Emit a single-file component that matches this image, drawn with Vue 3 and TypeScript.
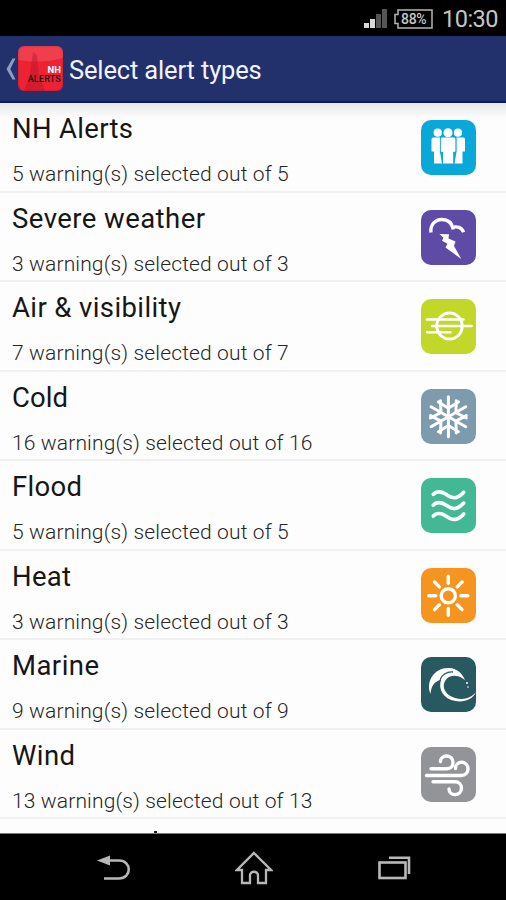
<script setup lang="ts">
interface AlertType {
  name: string
  count: number
  icon: string
  color: string
  width: number
}

const alerts: AlertType[] = [
  { name: 'NH Alerts', count: 5, icon: 'people', color: '#08a9d8', width: 121 },
  { name: 'Severe weather', count: 3, icon: 'storm', color: '#5d4ba5', width: 193 },
  { name: 'Air & visibility', count: 7, icon: 'air', color: '#c1d72a', width: 169 },
  { name: 'Cold', count: 16, icon: 'cold', color: '#7d9bad', width: 56 },
  { name: 'Flood', count: 5, icon: 'flood', color: '#43b894', width: 70 },
  { name: 'Heat', count: 3, icon: 'heat', color: '#f5941f', width: 59 },
  { name: 'Marine', count: 9, icon: 'marine', color: '#285961', width: 87 },
  { name: 'Wind', count: 13, icon: 'wind', color: '#929497', width: 63 },
]

const arms = [0, 60, 120, 180, 240, 300]
const rays = [0, 45, 90, 135, 180, 225, 270, 315]
</script>

<template>
  <div class="screen">
    <div class="status">
      <svg class="signal" width="23" height="20" viewBox="0 0 23 20">
        <rect x="0" y="14" width="5" height="5" fill="#d8d8d8" />
        <rect x="6" y="10" width="5" height="9" fill="#d8d8d8" />
        <rect x="12" y="5" width="5" height="14" fill="#555" />
        <rect x="18" y="0" width="5" height="19" fill="#555" />
      </svg>
      <div class="battery">
        <svg width="39" height="20" viewBox="0 0 39 20">
          <path d="M4 1H38V19H4V14.5H1V5.5H4Z" fill="none" stroke="#b5b5b5" stroke-width="1.5" />
        </svg>
        <span>88%</span>
      </div>
      <span class="clock">10:30</span>
    </div>

    <header class="bar">
      <svg class="chevron" width="10" height="22" viewBox="0 0 10 22">
        <path d="M6.5 .5H9.5L4.3 11L9.5 21.5H6.5L.5 11Z" fill="#919bc3" />
      </svg>
      <div class="logo">
        <svg width="45" height="45" viewBox="0 0 45 45">
          <path d="M0 0H45V12Q24 18 0 14Z" fill="#fff" opacity=".13" />
          <path d="M15 6L19 9L21 29L27 45H6L12 28Z" fill="#a31227" opacity=".35" />
        </svg>
        <div class="logo-text"><b>NH</b><span>ALERTS</span></div>
      </div>
      <h1>Select alert types</h1>
    </header>

    <main class="list">
      <div v-for="a in alerts" :key="a.name" class="row">
        <div class="text">
          <svg class="title" width="260" height="36">
            <text x="0" y="27.5" :textLength="a.width" lengthAdjust="spacing">{{ a.name }}</text>
          </svg>
          <p>{{ a.count }} warning(s) selected out of {{ a.count }}</p>
        </div>
        <svg class="icon" width="55" height="55" viewBox="0 0 55 55">
          <rect width="55" height="55" rx="10" :fill="a.color" />
          <g v-if="a.icon === 'people'" fill="#fff">
            <circle cx="16.7" cy="12.7" r="4.1" />
            <circle cx="37" cy="12.7" r="4.1" />
            <path d="M12 17.5H19V32L21 43.5H13V31.5H10.5V19.5Q10.5 17.5 12 17.5Z" />
            <path d="M42.5 17.5H35.5V32L33.5 43.5H41.5V31.5H44V19.5Q44 17.5 42.5 17.5Z" />
            <circle cx="27" cy="12.7" r="4.5" />
            <path d="M21.5 17.5H32.7Q34.6 17.5 34.6 19.5V32H32.3V43.5H22V32H19.7V19.5Q19.7 17.5 21.5 17.5Z" />
            <path d="M19.3 18V32H21.5V43M35 18V32H32.8V43" fill="none" :stroke="a.color" stroke-width=".6" />
          </g>
          <g v-else-if="a.icon === 'storm'">
            <path d="M10 22.5C9 15 14 9.5 21 9.5C27 9.5 31 13 32.2 19.5M30.5 17.7C36 15.5 41 17.5 42.6 22.3" fill="none" stroke="#fff" stroke-width="3.3" />
            <path d="M18.5 24L28 24.3L27.5 28.5L34.5 31.5L33 36L40.3 49L24.5 37.5L26.5 33.8L21 30.8L22.5 27.8Z" fill="#fff" />
          </g>
          <g v-else-if="a.icon === 'air'" fill="none" stroke="#fff" stroke-width="2.6" stroke-linecap="round">
            <ellipse cx="28.5" cy="27" rx="12.7" ry="13" stroke-width="2.9" />
            <path d="M6 20.5H42.5M11 27H50.5M6 33.3H29.5" />
          </g>
          <g v-else-if="a.icon === 'cold'" fill="none" stroke="#fff" stroke-width="3" stroke-linecap="round">
            <path v-for="d in arms" :key="d" d="M0 0V-20M-10 -14.9L0 -8.6L10 -14.9" :transform="`translate(27.4 27.8) rotate(${d})`" />
          </g>
          <g v-else-if="a.icon === 'flood'" fill="none" stroke="#fff" stroke-width="3.7" stroke-linecap="round">
            <path v-for="y in [16.3, 27.1, 38]" :key="y" :transform="`translate(0 ${y})`" d="M12.3 0C15 -3.2 20 -3.3 24 -.5C31 4.5 36 5.5 42.7 -2" />
          </g>
          <g v-else-if="a.icon === 'heat'" fill="none" stroke="#fff" stroke-width="3.4" stroke-linecap="round">
            <circle cx="27.3" cy="27.8" r="7.1" />
            <path v-for="d in rays" :key="d" d="M0 -12.6V-19.5" :transform="`translate(27.3 27.8) rotate(${d})`" />
          </g>
          <g v-else-if="a.icon === 'marine'" fill="#fff">
            <path d="M9.5 37C4 23 15 10 28 11C36 11.5 41 16 44 23C38 18 30 17 25.5 22C19.5 29 24 38 34 41C43 43.5 51 40.5 55 35C52 42.5 43 45.5 34.5 44C22 42 17 32 20 23C13 24 10 30 9.5 37Z" />
            <path d="M19 24C20 18 26 14.5 32 15" fill="none" :stroke="a.color" stroke-width="1.3" />
            <circle cx="46" cy="26" r="1" /><circle cx="47" cy="30" r=".8" />
          </g>
          <g v-else fill="none" stroke="#fff" stroke-width="3.4" stroke-linecap="round">
            <path d="M10 21.7H26C30 21.7 32 19 32 15.5C32 11.5 29 9 25.5 9C22 9 19.5 11.5 19.5 14.5" />
            <path d="M5.5 28.5H40C44.5 28.5 47 25.5 47 22C47 18 44 15.3 40.5 15.3C37 15.3 34.5 18 34.5 21.5" />
            <path d="M12 34.8H34C38 34.8 40.5 37.5 40.5 41C40.5 45 37.5 47.6 34 47.6C30.5 47.6 28 45 28 42" />
          </g>
        </svg>
      </div>
      <div class="next-row"><i></i></div>
    </main>

    <nav class="nav">
      <svg width="34" height="26" viewBox="0 0 34 26" fill="none" stroke="#b8b8b8" stroke-width="2.6">
        <path d="M10 5.5H22C35 5.5 35 23.5 22 23.5H7" /><path d="M0 5.5L13 .5V10.5Z" fill="#b8b8b8" stroke="none" />
      </svg>
      <svg class="home" width="38" height="34" viewBox="0 0 38 34" fill="none" stroke="#b8b8b8" stroke-width="2.3">
        <path d="M19 2L36 19H31V32H23V24.5C23 19.5 15 19.5 15 24.5V32H7V19H2Z" />
      </svg>
      <svg width="33" height="24" viewBox="0 0 33 24" fill="none" stroke="#b8b8b8" stroke-width="2.6">
        <rect x="1.5" y="6.5" width="26" height="15.5" /><path d="M11 1.8H31V18" />
      </svg>
    </nav>
  </div>
</template>

<style>
body { margin: 0; background: #000; }
</style>

<style scoped>
.screen {
  width: 506px;
  height: 900px;
  display: flex;
  flex-direction: column;
  overflow: hidden;
  background: #000;
  font-family: Roboto, "Liberation Sans", sans-serif;
}
.status {
  height: 36px;
  flex: none;
  display: flex;
  align-items: center;
  justify-content: flex-end;
  box-sizing: border-box;
  padding: 1px 8px 0 0;
  color: #c4c4c4;
}
.signal { margin-right: 7px; }
.battery { position: relative; width: 39px; height: 20px; margin-right: 9px; }
.battery svg { display: block; }
.battery span { position: absolute; left: 7px; top: 2px; font-size: 14px; line-height: 16px; font-weight: 500; letter-spacing: -.3px; }
.clock { font-size: 23.5px; line-height: 34px; letter-spacing: -.5px; }
.bar {
  height: 67px;
  flex: none;
  display: flex;
  align-items: center;
  box-sizing: border-box;
  padding-left: 6px;
  background: #22306c;
  border-bottom: 2px solid #071c59;
}
.chevron { margin-right: 2px; }
.logo {
  position: relative;
  width: 45px;
  height: 45px;
  border-radius: 6px;
  overflow: hidden;
  background: #ee2233;
  box-shadow: inset 0 0 2px #8e1b39;
}
.logo-text {
  position: absolute;
  right: 2px;
  bottom: 7px;
  display: flex;
  flex-direction: column;
  align-items: flex-end;
  font-size: 9px;
  line-height: 10px;
  font-weight: 500;
  color: #250d17;
}
.logo-text b { color: #fff; font-size: 9.5px; line-height: 9px; }
.logo-text span { letter-spacing: .2px; }
h1 { margin: 2px 0 0 6px; font-size: 25.5px; line-height: 34px; font-weight: 400; color: #f2f3fa; letter-spacing: -.15px; white-space: nowrap; }
.list {
  flex: 1;
  min-height: 0;
  overflow: hidden;
  background: linear-gradient(#e6e6e8, #fdfdfd 15px);
}
.row {
  height: 89.5px;
  box-sizing: border-box;
  display: flex;
  align-items: flex-start;
  justify-content: space-between;
  padding: 7px 30.4px 0 12px;
  border-bottom: 2px solid #f0f0f0;
}
.title { display: block; font-size: 27.5px; fill: #161616; }
.row p { margin: 12px 0 0; font-size: 21px; line-height: 32px; color: #262626; font-weight: 300; letter-spacing: .14px; white-space: nowrap; }
.icon { margin-top: 10px; flex: none; }
.next-row { display: flex; height: 14px; align-items: flex-end; padding: 0 0 0 154px; }
.next-row i { width: 3px; height: 2px; background: #222; }
.nav {
  height: 67px;
  flex: none;
  display: flex;
  align-items: center;
  justify-content: space-between;
  box-sizing: border-box;
  padding: 1px 95px 0 97px;
  background: #000;
  border-top: 1px solid #777;
}
.home { margin-right: 2px; }
</style>
